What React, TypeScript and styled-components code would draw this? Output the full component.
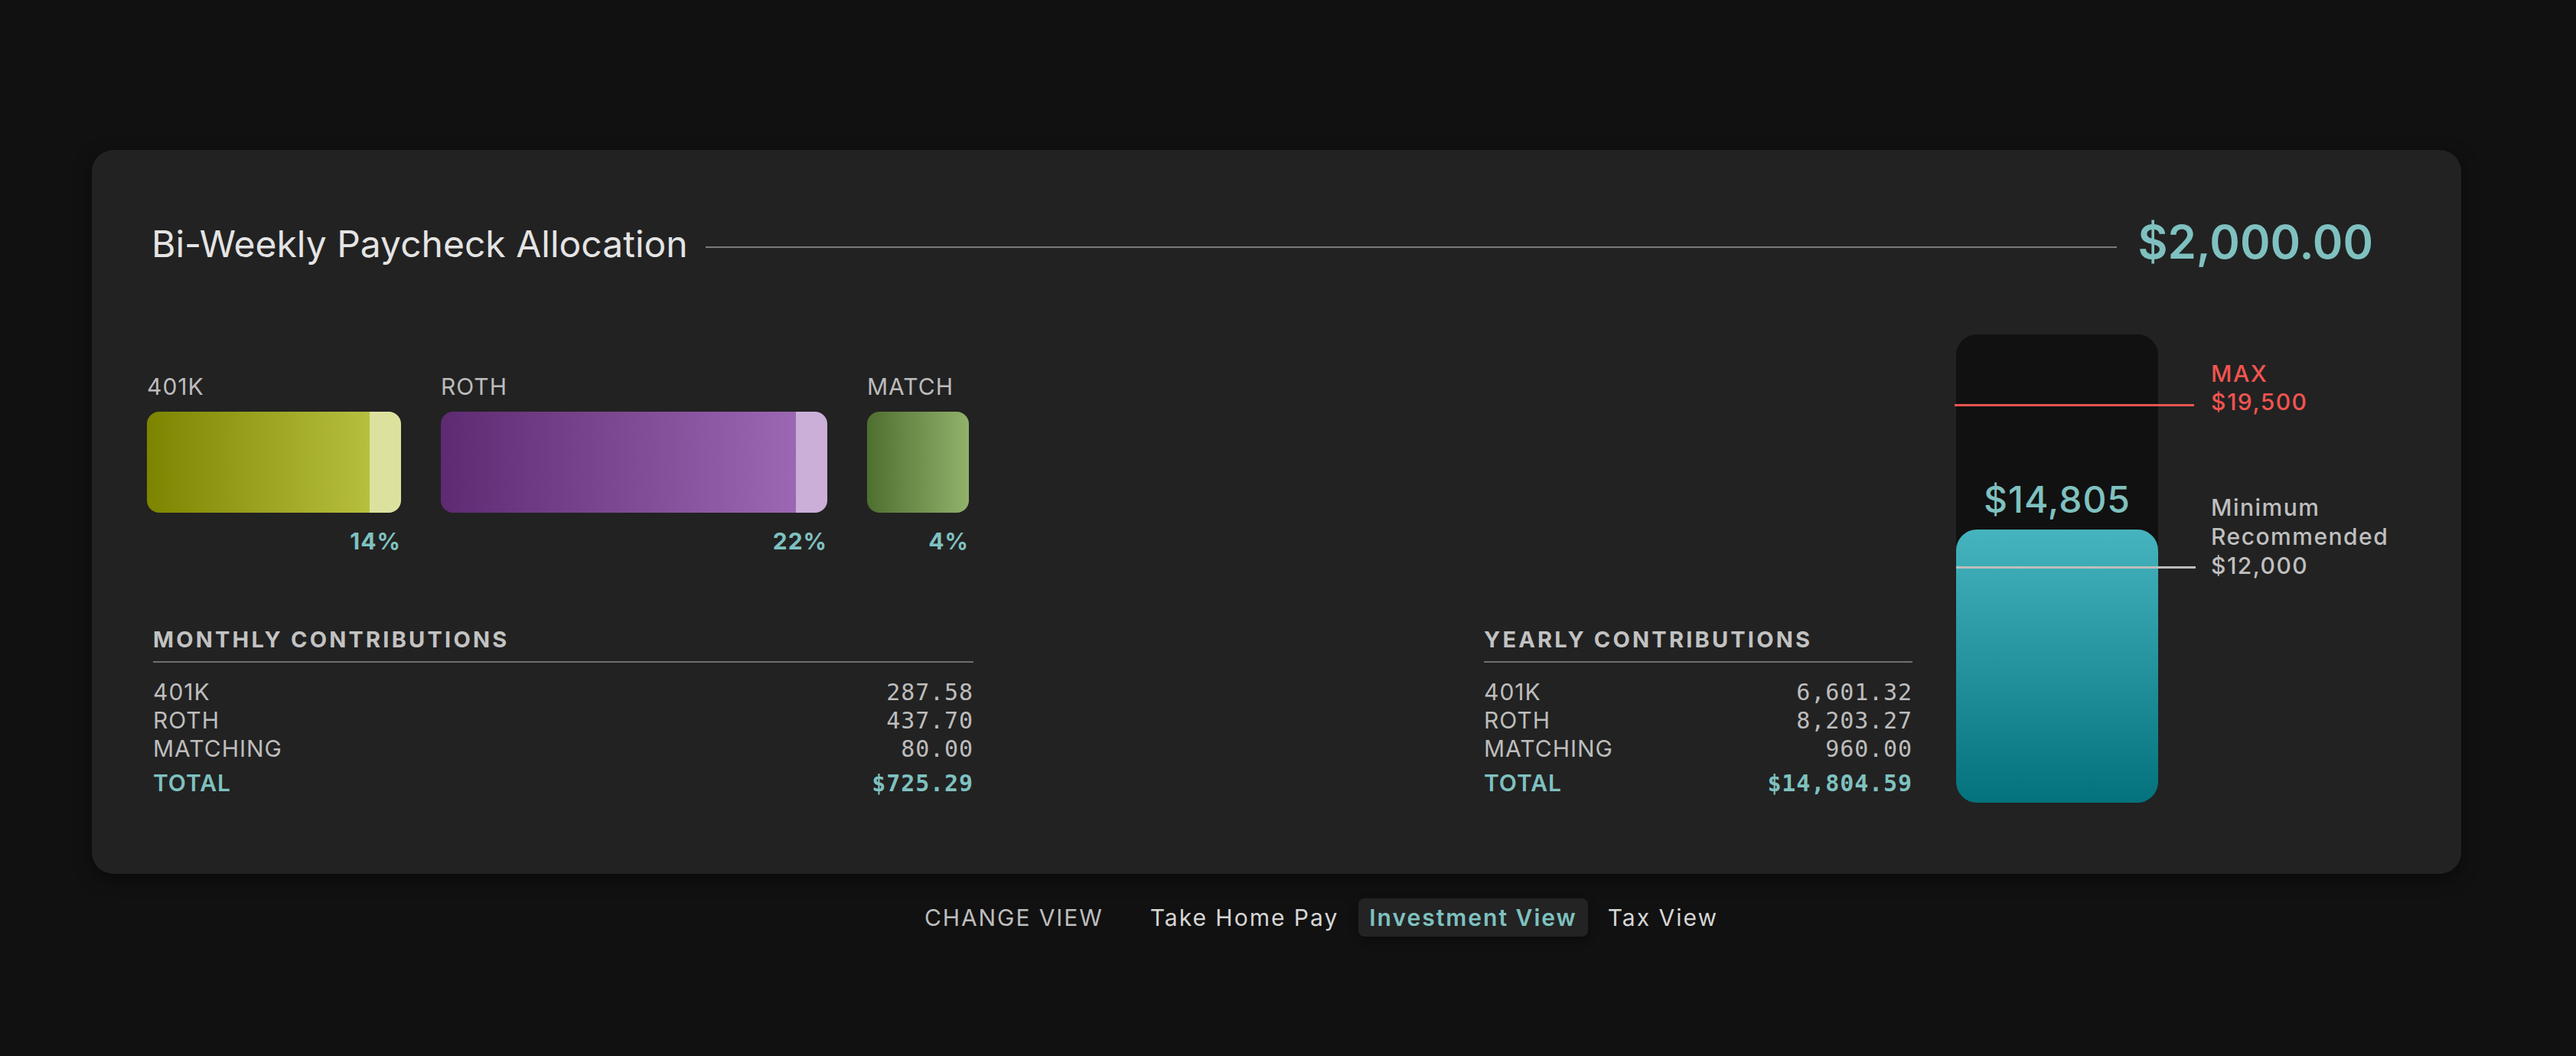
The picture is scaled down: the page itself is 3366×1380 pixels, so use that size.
import React from 'react';
import styled, { createGlobalStyle } from 'styled-components';

const GlobalStyle = createGlobalStyle`
  html, body {
    margin: 0;
    background: #111111;
    font-family: Inter, "Open Sans", sans-serif;
  }
`;

const TEAL = '#7fc1c0';

const Page = styled.div`
  min-height: 1380px;
  box-sizing: border-box;
  padding: 196px 150px 0 120px;
`;

const Card = styled.section`
  background: #222222;
  border-radius: 28px;
  box-shadow: 0 6px 24px rgba(0, 0, 0, 0.45);
  padding: 87px 80px 93px 72px;
`;

const Header = styled.header`
  display: flex;
  align-items: center;
  height: 72px;
  margin-right: 35px;
`;

const Title = styled.h1`
  margin: 0 0 0 6px;
  font: 400 48px/58px Inter, sans-serif;
  color: #e4e4e4;
  white-space: nowrap;
`;

const Rule = styled.div`
  flex: 1;
  height: 2px;
  background: #7a7a7a;
  margin: 7px 27px 0 23px;
`;

const Amount = styled.div`
  font: 600 60px/72px Inter, sans-serif;
  color: ${TEAL};
  margin-top: -6px;
`;

const Body = styled.div`
  display: grid;
  grid-template-columns: 1080px 1fr 560px 637px;
  grid-template-rows: auto auto;
  margin-top: 82px;
`;

const Bars = styled.div`
  grid-column: 1;
  grid-row: 1;
  display: flex;
  gap: 52px;
  padding-top: 50px;
`;

const BarItem = styled.div<{ $width: number }>`
  display: flex;
  flex-direction: column;
  width: ${p => p.$width}px;
`;

const BarLabel = styled.div`
  font: 400 30px/36px Inter, sans-serif;
  letter-spacing: 1px;
  color: #bcbcbc;
  margin-bottom: 15px;
`;

const Bar = styled.div`
  display: flex;
  height: 132px;
  border-radius: 16px;
  overflow: hidden;
`;

const BarFill = styled.div<{ $from: string; $to: string }>`
  flex: 1;
  background: linear-gradient(90deg, ${p => p.$from}, ${p => p.$to});
`;

const BarCap = styled.div<{ $color: string }>`
  width: 41px;
  background: ${p => p.$color};
`;

const Percent = styled.div`
  margin-top: 19px;
  font: 700 30px/36px Inter, sans-serif;
  letter-spacing: 1px;
  color: ${TEAL};
  text-align: right;
`;

const Table = styled.div<{ $col: number; $indent?: number }>`
  grid-column: ${p => p.$col};
  grid-row: 2;
  padding-top: 86px;
  margin-left: ${p => p.$indent || 0}px;
`;

const TableHeading = styled.h3`
  margin: 0 0 20px;
  padding-bottom: 10px;
  border-bottom: 2px solid #6e6e6e;
  font: 700 29px/36px Inter, sans-serif;
  letter-spacing: 3.2px;
  color: #c2c2c2;
`;

const Row = styled.div<{ $total?: boolean }>`
  display: flex;
  justify-content: space-between;
  align-items: baseline;
  line-height: 37px;
  margin-top: ${p => (p.$total ? '8px' : '0')};
  color: ${p => (p.$total ? TEAL : '#bdbdbd')};
`;

const RowLabel = styled.span<{ $total?: boolean }>`
  font-family: Inter, sans-serif;
  font-size: 30px;
  font-weight: ${p => (p.$total ? 600 : 400)};
  letter-spacing: 1px;
`;

const RowValue = styled.span<{ $total?: boolean }>`
  font-family: "DejaVu Sans Mono", "Liberation Mono", monospace;
  font-size: 30px;
  font-weight: ${p => (p.$total ? 700 : 400)};
  letter-spacing: 0.9px;
`;

const Gauge = styled.div`
  grid-column: 4;
  grid-row: 1 / span 2;
  position: relative;
  margin-left: 57px;
  width: 264px;
  height: 612px;
`;

const Tube = styled.div`
  height: 100%;
  background: #111111;
  border-radius: 27px;
  display: flex;
  flex-direction: column;
  justify-content: flex-end;
`;

const GaugeValue = styled.div`
  margin-bottom: 10px;
  text-align: center;
  font: 500 48px/58px Inter, sans-serif;
  letter-spacing: 1px;
  color: ${TEAL};
`;

const GaugeFill = styled.div`
  height: 357px;
  border-radius: 27px;
  background: linear-gradient(180deg, #45b4be 0%, #04727c 100%);
`;

const Marker = styled.div<{ $top: number; $color: string; $left: number }>`
  position: absolute;
  left: ${p => p.$left}px;
  top: ${p => p.$top}px;
  width: 313px;
  height: 3px;
  background: ${p => p.$color};
`;

const MarkerText = styled.div<{ $top: number; $color: string; $lh: number }>`
  position: absolute;
  left: 333px;
  top: ${p => p.$top}px;
  white-space: nowrap;
  font: 500 30px/${p => p.$lh}px Inter, sans-serif;
  letter-spacing: 1.5px;
  color: ${p => p.$color};
`;

const Nav = styled.nav`
  display: flex;
  align-items: center;
  justify-content: center;
  gap: 12px;
  margin-top: 32px;
  padding-left: 131px;
`;

const NavLabel = styled.span`
  margin-right: 35px;
  font: 400 30px/50px Inter, sans-serif;
  letter-spacing: 1.9px;
  color: #bdbdbd;
`;

const NavTab = styled.button<{ $active?: boolean }>`
  height: 50px;
  padding: 0 14px;
  border: 0;
  border-radius: 8px;
  cursor: pointer;
  font: ${p => (p.$active ? 600 : 400)} 30px/50px Inter, sans-serif;
  letter-spacing: 2px;
  color: ${p => (p.$active ? TEAL : '#d6d6d6')};
  background: ${p => (p.$active ? '#232323' : 'transparent')};
  box-shadow: ${p => (p.$active ? '0 4px 12px rgba(0,0,0,0.35)' : 'none')};
`;

const bars = [
  { label: '401K', width: 332, from: '#7c8400', to: '#b7c03e', cap: '#dce29e', pct: '14%' },
  { label: 'ROTH', width: 505, from: '#5e2a72', to: '#9c67b3', cap: '#cbafd8', pct: '22%' },
  { label: 'MATCH', width: 133, from: '#4e6f30', to: '#91b26b', cap: '', pct: '4%' },
];

const monthly = [
  ['401K', '287.58'],
  ['ROTH', '437.70'],
  ['MATCHING', '80.00'],
];

const yearly = [
  ['401K', '6,601.32'],
  ['ROTH', '8,203.27'],
  ['MATCHING', '960.00'],
];

const Contributions: React.FC<{ title: string; rows: string[][]; total: string; col: number; indent?: number }> = ({
  title,
  rows,
  total,
  col,
  indent,
}) => (
  <Table $col={col} $indent={indent}>
    <TableHeading>{title}</TableHeading>
    {rows.map(([label, value]) => (
      <Row key={label}>
        <RowLabel>{label}</RowLabel>
        <RowValue>{value}</RowValue>
      </Row>
    ))}
    <Row $total>
      <RowLabel $total>TOTAL</RowLabel>
      <RowValue $total>{total}</RowValue>
    </Row>
  </Table>
);

const App: React.FC = () => {
  return (
    <Page>
      <GlobalStyle />
      <Card>
        <Header>
          <Title>Bi-Weekly Paycheck Allocation</Title>
          <Rule />
          <Amount>$2,000.00</Amount>
        </Header>

        <Body>
          <Bars>
            {bars.map(b => (
              <BarItem key={b.label} $width={b.width}>
                <BarLabel>{b.label}</BarLabel>
                <Bar>
                  <BarFill $from={b.from} $to={b.to} />
                  {b.cap && <BarCap $color={b.cap} />}
                </Bar>
                <Percent>{b.pct}</Percent>
              </BarItem>
            ))}
          </Bars>

          <Contributions title="MONTHLY CONTRIBUTIONS" rows={monthly} total="$725.29" col={1} indent={8} />
          <Contributions title="YEARLY CONTRIBUTIONS" rows={yearly} total="$14,804.59" col={3} />

          <Gauge>
            <Tube>
              <GaugeValue>$14,805</GaugeValue>
              <GaugeFill />
            </Tube>
            <Marker $top={91} $left={-2} $color="#f2544f" />
            <Marker $top={303} $left={0} $color="#bdbdbd" />
            <MarkerText $top={33} $lh={37} $color="#f2544f">
              MAX
              <br />
              $19,500
            </MarkerText>
            <MarkerText $top={207} $lh={38} $color="#bfbfbf">
              Minimum
              <br />
              Recommended
              <br />
              $12,000
            </MarkerText>
          </Gauge>
        </Body>
      </Card>

      <Nav>
        <NavLabel>CHANGE VIEW</NavLabel>
        <NavTab>Take Home Pay</NavTab>
        <NavTab $active>Investment View</NavTab>
        <NavTab>Tax View</NavTab>
      </Nav>
    </Page>
  );
};

export default App;
